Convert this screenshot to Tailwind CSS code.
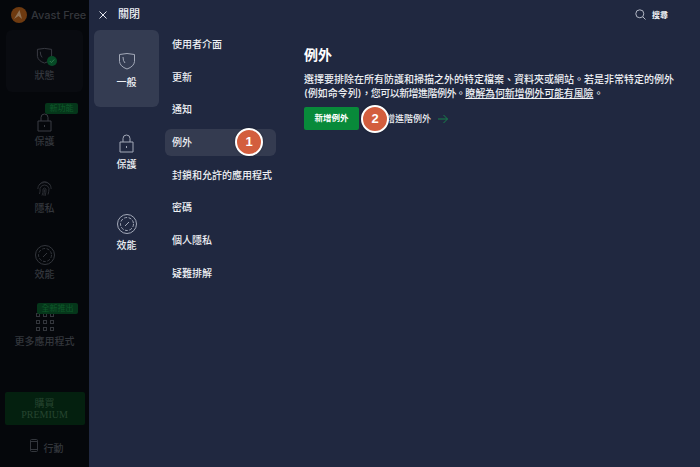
<!DOCTYPE html>
<html lang="zh-Hant">
<head>
<meta charset="utf-8">
<script src="https://cdn.jsdelivr.net/npm/@tailwindcss/browser@4"></script>
</head>
<body class="m-0">
<div class="relative flex h-[467px] w-[700px] overflow-hidden bg-[#202840] font-['Inter','Noto_Sans_CJK_TC',sans-serif] text-[10px] text-[#eef0f4]">

  <!-- dimmed app sidebar -->
  <aside class="flex h-full w-[89px] shrink-0 flex-col items-center bg-[#05070b] text-[#33363c]">
    <div class="flex h-[30px] w-full items-center gap-[4px] pl-[11px]">
      <svg class="size-[16px]" viewBox="0 0 16 16"><circle cx="8" cy="8" r="8" fill="#6e3a10"/><path d="M3 12 8.500 3l2.500 9-3.500-3z" fill="#8f7358"/></svg>
      <span class="whitespace-nowrap text-[11px] font-medium text-[#34363b]">Avast Free</span>
    </div>
    <div class="flex h-[62px] w-[77px] flex-col items-center rounded-[6px] bg-[#090b10] pt-[17px]">
      <div class="relative h-[19px] w-[17px]">
        <svg class="size-[17px]" viewBox="0 0 17 18" fill="none" stroke="#3a3d44"><path d="M1 2.500Q8.500.500 16 2.500V10Q15 15 8.500 17 2 15 1 10zM4 5q0 4 2 6"/></svg>
        <span class="absolute left-[11px] top-[9px] flex size-[10px] items-center justify-center rounded-full bg-[#064a26]">
          <svg class="size-[6px]" viewBox="0 0 6 6" fill="none" stroke="#2f7a50"><path d="m.8 3 1.600 1.600L5.200 1.500"/></svg>
        </span>
      </div>
      <span class="mt-[2px] font-medium leading-[14px]">狀態</span>
    </div>
    <div class="relative mt-[11px] flex w-full flex-col items-center">
      <span class="absolute left-[45px] top-0 h-[11px] w-[33px] rounded-[2px] bg-[#05361a] text-center text-[8px] leading-[11px] text-[#0f5a2a]">新功能</span>
      <svg class="mt-[10px] h-[19px] w-[15px]" viewBox="0 0 15 19" fill="none" stroke="#3a3d44"><path d="M4 8V4.500a3.500 3.500 0 0 1 7 0V8M1 8h13v10H1zM7.500 12v2"/></svg>
      <span class="mt-[2px] font-medium leading-[14px]">保護</span>
    </div>
    <div class="mt-[32px] flex w-full flex-col items-center">
      <svg class="h-[17px] w-[15px]" viewBox="0 0 15 17" fill="none" stroke="#33363c" stroke-width=".8"><path d="M2 5Q7.500-2 13 5M.8 9Q1 3 7.500 2.500T14.200 9M2.500 14Q3.500 11 3 8.500 4 5 7.500 5T12 8.500q0 3-1 6M5 15.500q1.500-3 1-6.500 1.500-2 3 0 .3 3-1 7M7.500 9.500q0 3-.8 6"/></svg>
      <span class="mt-[4px] font-medium leading-[14px]">隱私</span>
    </div>
    <div class="mt-[30px] flex w-full flex-col items-center">
      <svg class="size-[20px]" viewBox="0 0 20 20" fill="none" stroke="#33363c"><circle cx="10" cy="10" r="9.500"/><circle cx="10" cy="10" r="6.500" stroke-dasharray="3 1.500"/><path d="m8 12 4-4"/></svg>
      <span class="mt-[2px] font-medium leading-[14px]">效能</span>
    </div>
    <div class="relative mt-[22px] flex w-full flex-col items-center">
      <span class="absolute left-[37px] top-0 h-[11px] w-[41px] rounded-[2px] bg-[#05361a] text-center text-[8px] leading-[11px] text-[#0f5a2a]">全新推出</span>
      <div class="mt-[10px] grid grid-cols-3 gap-[3px]">
        <i class="size-[4px] border border-[#33363c]"></i><i class="size-[4px] border border-[#33363c]"></i><i class="size-[4px] border border-[#33363c]"></i>
        <i class="size-[4px] border border-[#33363c]"></i><i class="size-[4px] border border-[#33363c]"></i><i class="size-[4px] border border-[#33363c]"></i>
        <i class="size-[4px] border border-[#33363c]"></i><i class="size-[4px] border border-[#33363c]"></i><i class="size-[4px] border border-[#33363c]"></i>
      </div>
      <span class="mt-[3px] whitespace-nowrap font-medium leading-[14px]">更多應用程式</span>
    </div>
    <div class="mt-auto flex h-[33px] w-[80px] flex-col items-center justify-center rounded-[2px] bg-[#04200f] leading-[11px] text-[#264530]">
      <span>購買</span>
      <span class="font-['Liberation_Serif',serif]">PREMIUM</span>
    </div>
    <div class="mb-[14px] mt-[14px] flex h-[14px] gap-[6px] pl-[4px]">
      <svg class="h-[13px] w-[8px]" viewBox="0 0 8 13" fill="none" stroke="#33363c"><rect x=".5" y=".5" width="7" height="12" rx="1"/><path d="M.5 2.500h7M.5 10.500h7"/></svg>
      <span class="mt-[2px] font-medium leading-[14px]">行動</span>
    </div>
  </aside>

  <!-- settings panel -->
  <div class="flex min-w-0 flex-1 flex-col">
    <header class="flex h-[30px] shrink-0 items-center pb-[1px]">
      <svg class="ml-[10px] size-[8px]" viewBox="0 0 8 8" fill="none" stroke="#e4e7ee"><path d="m.5.500 7 7M7.500.500l-7 7"/></svg>
      <span class="ml-[11px] text-[11px] font-medium">關閉</span>
      <div class="ml-auto mr-[32px] flex items-center gap-[6px]">
        <svg class="size-[11px]" viewBox="0 0 11 11" fill="none" stroke="#b4b9c6"><circle cx="4.800" cy="4.800" r="4"/><path d="m7.800 7.800 2.700 2.700"/></svg>
        <span class="mt-[1px] text-[8px] font-bold">搜尋</span>
      </div>
    </header>
    <div class="flex min-h-0 flex-1">
      <nav class="flex w-[76px] shrink-0 flex-col">
        <div class="ml-[5px] flex h-[77px] w-[65px] flex-col items-center rounded-[6px] bg-[#343c52]">
          <svg class="mt-[22px] h-[18px] w-[16px]" viewBox="0 0 16 18" fill="none" stroke="#a3a9b8"><path d="M.5 2.500Q8 .500 15.500 2.500V9.500Q15 14.500 8 17 1 14.500.5 9.500zM4 5q0 4 2 6"/></svg>
          <span class="mt-[5px] font-medium leading-[14px]">一般</span>
        </div>
        <div class="ml-[5px] mt-[27px] flex w-[65px] flex-col items-center">
          <svg class="h-[19px] w-[15px]" viewBox="0 0 15 19" fill="none" stroke="#a3a9b8"><path d="M4 8V4.500a3.500 3.500 0 0 1 7 0V8M1 8h13v10H1zM7.500 12v2"/></svg>
          <span class="mt-[4px] font-medium leading-[14px]">保護</span>
        </div>
        <div class="ml-[5px] mt-[43px] flex w-[65px] flex-col items-center">
          <svg class="size-[20px]" viewBox="0 0 20 20" fill="none" stroke="#a3a9b8"><circle cx="10" cy="10" r="9.500"/><circle cx="10" cy="10" r="6.500" stroke-dasharray="3 1.500"/><path d="m8 12 4-4"/></svg>
          <span class="mt-[4px] font-medium leading-[14px]">效能</span>
        </div>
      </nav>
      <ul class="flex w-[139px] shrink-0 flex-col gap-[5.700px] pt-[1px] font-medium">
        <li class="flex h-[27px] items-center rounded-[6px] pl-[7px]">使用者介面</li>
        <li class="flex h-[27px] items-center rounded-[6px] pl-[7px]">更新</li>
        <li class="flex h-[27px] items-center rounded-[6px] pl-[7px]">通知</li>
        <li class="flex h-[27px] w-[111px] items-center rounded-[6px] bg-[#343b50] pl-[7px]">例外</li>
        <li class="flex h-[27px] items-center whitespace-nowrap rounded-[6px] pl-[7px]">封鎖和允許的應用程式</li>
        <li class="flex h-[27px] items-center rounded-[6px] pl-[7px]">密碼</li>
        <li class="flex h-[27px] items-center rounded-[6px] pl-[7px]">個人隱私</li>
        <li class="flex h-[27px] items-center rounded-[6px] pl-[7px]">疑難排解</li>
      </ul>
      <section class="min-w-0 flex-1 pt-[15px]">
        <h1 class="text-[14px] font-bold leading-[20px] text-white">例外</h1>
        <p class="mt-[8px] whitespace-nowrap text-[10px] font-medium leading-[13.500px]">選擇要排除在所有防護和掃描之外的特定檔案、資料夾或網站。若是非常特定的例外<br>(例如命令列)<span class="tracking-[-0.550px]">，您可以新增進階例外。</span><span class="tracking-[-0.150px] underline">瞭解為何新增例外可能有風險</span>。</p>
        <div class="mt-[7px] flex items-center">
          <button class="flex h-[23px] w-[55px] items-center justify-center rounded-[2px] bg-[#088a3a] text-[8.500px] font-bold text-white">新增例外</button>
          <span class="ml-[18px] whitespace-nowrap text-[9px] font-medium">新增進階例外</span>
          <svg class="ml-[7px] size-[10px]" viewBox="0 0 10 10" fill="none" stroke="#16804a"><path d="M0 5h9.500M5.500 1l4 4-4 4"/></svg>
        </div>
      </section>
    </div>
  </div>

  <!-- step markers -->
  <span class="absolute left-[235px] top-[128px] flex size-[28px] items-center justify-center rounded-full border-2 border-white bg-[#d35e3e] font-['Liberation_Sans',sans-serif] text-[13px] font-bold text-white shadow-[0_0_2px_rgba(0,0,0,0.4)]">1</span>
  <span class="absolute left-[361px] top-[105px] flex size-[28px] items-center justify-center rounded-full border-2 border-white bg-[#d35e3e] font-['Liberation_Sans',sans-serif] text-[13px] font-bold text-white shadow-[0_0_2px_rgba(0,0,0,0.4)]">2</span>
</div>
</body>
</html>
